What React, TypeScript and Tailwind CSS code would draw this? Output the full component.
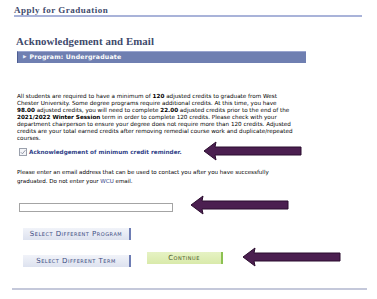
import React from "react";

function Arrow({ className }: { className: string }) {
  return (
    <svg className={className} width="99" height="20" viewBox="0 0 99 20">
      <polygon
        points="1,10 13,1 12,6 98,6 98,14 12,14 13,19"
        fill="#4b1f50"
        stroke="#2a0c2e"
        strokeWidth="1"
      />
    </svg>
  );
}

export default function App() {
  const sans = { fontFamily: '"DejaVu Sans", Verdana, sans-serif' };
  const serif = { fontFamily: '"Liberation Serif", Georgia, serif' };
  return (
    <div className="relative w-[377px] h-[299px] bg-white overflow-hidden" style={sans}>
      {/* header */}
      <div className="ml-[14px] w-[348px] pt-[5px] border-b-2 border-[#a9b3d9]">
        <div className="text-[9px] leading-[10px] font-bold text-[#3e4a6c] tracking-[0.5px]" style={serif}>
          Apply for Graduation
        </div>
      </div>

      <div className="ml-[16px] mt-[17px] text-[10.8px] leading-[14px] font-bold text-[#3e4a6c] tracking-[0.1px]" style={serif}>
        Acknowledgement and Email
      </div>

      <div className="ml-[17px] mt-[3px] w-[289px] h-[12px] bg-[#6f7fb1] border-t border-[#9aa5cf] border-l border-l-[#4d5d92] flex items-center">
        <span className="ml-[5px] text-[4.5px] text-[#e8ecf8] leading-none">▶</span>
        <span className="ml-[3px] text-[6.2px] font-bold text-white leading-none tracking-[0.2px]">
          Program: Undergraduate
        </span>
      </div>

      <div className="ml-[17px] mt-[30px] text-[5.65px] leading-[7px] text-black whitespace-nowrap">
        <div>
          All students are required to have a minimum of <b>120</b> adjusted credits to graduate from West
        </div>
        <div>Chester University. Some degree programs require additional credits. At this time, you have</div>
        <div>
          <b>98.00</b> adjusted credits, you will need to complete <b>22.00</b> adjusted credits prior to the end of the
        </div>
        <div>
          <b>2021/2022 Winter Session</b> term in order to complete 120 credits. Please check with your
        </div>
        <div>department chairperson to ensure your degree does not require more than 120 credits. Adjusted</div>
        <div>credits are your total earned credits after removing remedial course work and duplicate/repeated</div>
        <div>courses.</div>
      </div>

      <div className="ml-[19px] mt-[6px] flex items-center gap-[2px]">
        <div className="w-[8px] h-[8px] border border-[#9aa0ac] bg-[#f4f5f8] flex items-center justify-center">
          <svg width="6" height="6" viewBox="0 0 6 6">
            <path d="M0.8 3.2 L2.4 4.8 L5.4 1.2" fill="none" stroke="#8a90a0" strokeWidth="0.9" />
          </svg>
        </div>
        <span className="text-[5.7px] leading-[8px] font-bold text-[#2f3f88]">
          Acknowledgement of minimum credit reminder.
        </span>
      </div>

      <div className="ml-[17px] mt-[12px] text-[5.55px] leading-[9px] text-black whitespace-nowrap">
        <div>Please enter an email address that can be used to contact you after you have successfully</div>
        <div>
          graduated. Do not enter your <span className="text-[#2f3f88]">WCU</span> email.
        </div>
      </div>

      <div className="ml-[19px] mt-[17px] w-[154px] h-[9px] border border-[#a4a4a4] bg-white" />

      <div className="ml-[23px] mt-[16px] w-[108px] h-[12px] bg-gradient-to-b from-[#f1f3f9] to-[#dde2ef] border-r-2 border-[#6e7db4] flex items-center justify-center">
        <span className="text-[7px] leading-none text-[#3d4c82] tracking-[0.5px]" style={{ fontVariant: "small-caps" }}>
          Select Different Program
        </span>
      </div>

      <div className="flex items-end mt-[12px]">
        <div className="ml-[23px] w-[108px] h-[12px] bg-gradient-to-b from-[#f1f3f9] to-[#dde2ef] border-r-2 border-[#6e7db4] flex items-center justify-center">
          <span className="text-[7px] leading-none text-[#3d4c82] tracking-[0.5px]" style={{ fontVariant: "small-caps" }}>
            Select Different Term
          </span>
        </div>
        <div className="ml-[16px] mb-[3px] w-[76px] h-[12px] bg-gradient-to-b from-[#e6f2c4] to-[#d9eaaa] border-r-2 border-[#8cc152] flex items-center justify-center">
          <span className="text-[7px] leading-none text-[#4d5a2c] tracking-[0.5px]" style={{ fontVariant: "small-caps" }}>
            Continue
          </span>
        </div>
      </div>

      <div className="ml-[12px] mt-[21px] w-[355px] h-[2px] bg-[#c4c8da]" />

      {/* annotation arrows */}
      <Arrow className="absolute left-[203px] top-[141px]" />
      <Arrow className="absolute left-[190px] top-[195px]" />
      <Arrow className="absolute left-[242px] top-[247px]" />
    </div>
  );
}
